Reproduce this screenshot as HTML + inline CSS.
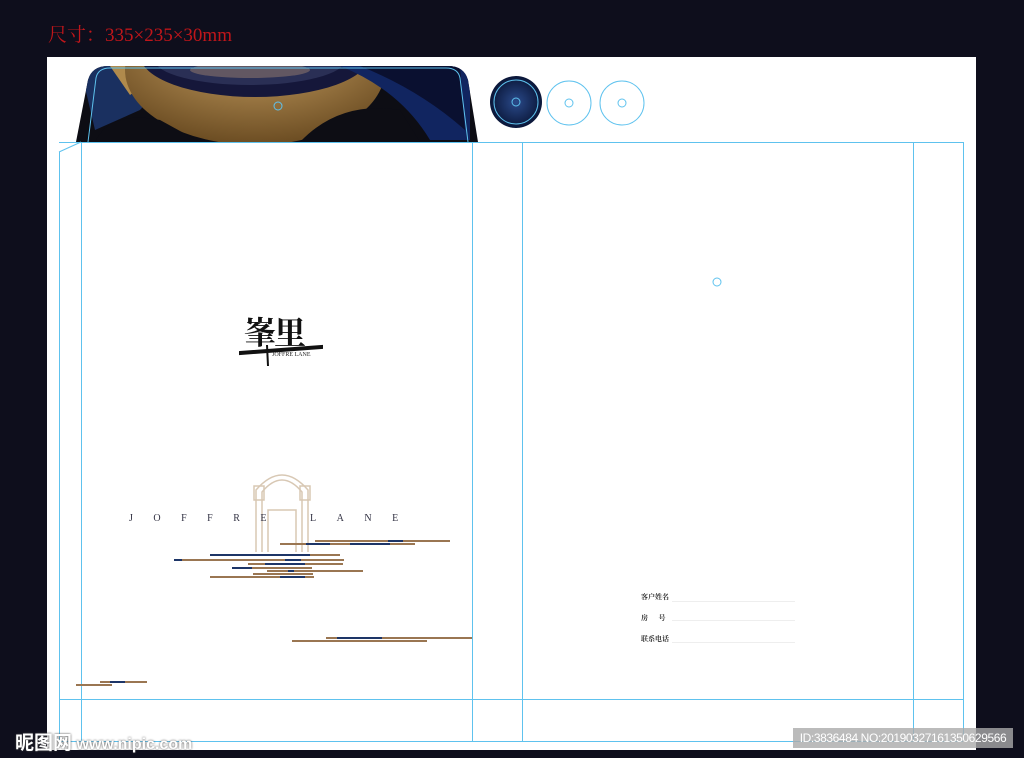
<!DOCTYPE html><html><head><meta charset="utf-8"><style>
body{margin:0;width:1024px;height:758px;background:#0e0e1c;position:relative;overflow:hidden;font-family:"Liberation Sans",sans-serif}
.a{position:absolute}
.h{position:absolute;height:1px;background:#5ec2ee}
.v{position:absolute;width:1px;background:#5ec2ee}
.b{position:absolute;height:2px;background:#9a7652}
.n{position:absolute;height:2px;background:#1d3567}
</style></head><body>
<div class="a" style="left:48px;top:20px;color:#c0161a;font:19px 'Liberation Serif','Noto Serif CJK SC',serif;white-space:nowrap">尺寸：335×235×30mm</div>
<div class="a" style="left:47px;top:57px;width:929px;height:693px;background:#fff"></div>
<svg class="a" style="left:0;top:0" width="1024" height="758">
<defs><radialGradient id="g1" cx="0.5" cy="0.3" r="0.7"><stop offset="0" stop-color="#d0a868"/><stop offset="1" stop-color="#6b4c22"/></radialGradient>
<radialGradient id="g2" cx="0.5" cy="0.5" r="0.5"><stop offset="0" stop-color="#2a4a8a"/><stop offset="1" stop-color="#0a1638"/></radialGradient>
<clipPath id="c"><path d="M76 142 L88 80 Q92 66 108 66 L448 66 Q464 66 468 80 L478 142 Z"/></clipPath></defs>
<path d="M76 142 L88 80 Q92 66 108 66 L448 66 Q464 66 468 80 L478 142 Z" fill="#0d0d14"/>
<g clip-path="url(#c)">
<path d="M80 66 L180 66 L140 110 L95 130 Z" fill="#1a3060"/>
<path d="M110 66 L170 66 L130 95 Z" fill="#b08a4c"/>
<ellipse cx="255" cy="70" rx="130" ry="75" fill="url(#g1)"/>
<ellipse cx="255" cy="55" rx="115" ry="42" fill="#15173a"/>
<ellipse cx="250" cy="60" rx="95" ry="25" fill="#2a2f55"/>
<ellipse cx="250" cy="70" rx="60" ry="8" fill="#9a8070" opacity=".5"/>
<path d="M340 66 L470 66 L470 140 L430 140 Q400 90 340 66Z" fill="#112560"/>
<path d="M360 66 L460 66 L465 130 Q420 90 360 66Z" fill="#0a1030"/>
<path d="M300 142 Q340 100 400 110 L420 142Z" fill="#0d0d14"/>
<path d="M95 142 Q110 110 160 120 L200 142Z" fill="#0d0d14"/>
</g>
<path d="M88 142 L96 78 Q98 68 110 68 L446 68 Q458 68 460 78 L468 142" fill="none" stroke="#5ec2ee" stroke-width="1"/>
<circle cx="278" cy="106" r="4" fill="none" stroke="#5ec2ee"/>
<circle cx="516" cy="102" r="26" fill="url(#g2)"/>
<circle cx="516" cy="102" r="22" fill="none" stroke="#5ec2ee"/>
<circle cx="516" cy="102" r="4" fill="none" stroke="#5ec2ee"/>
<circle cx="569" cy="103" r="22" fill="none" stroke="#5ec2ee"/>
<circle cx="569" cy="103" r="4" fill="none" stroke="#5ec2ee"/>
<circle cx="622" cy="103" r="22" fill="none" stroke="#5ec2ee"/>
<circle cx="622" cy="103" r="4" fill="none" stroke="#5ec2ee"/>
<circle cx="717" cy="282" r="4" fill="none" stroke="#5ec2ee"/>
<path d="M59 152 L81 142" stroke="#5ec2ee" fill="none"/>
<path d="M240 352 L322 346 L322 348 L240 354Z M267 345 L268 366" stroke="#111" stroke-width="2" fill="#111"/>
<g fill="none" stroke="#d8c8b4" stroke-width="1.5">
<path d="M256 552 L256 490 Q282 460 308 490 L308 552"/><path d="M262 552 L262 492 Q282 468 302 492 L302 552"/>
<path d="M268 552 L268 510 L296 510 L296 552"/><path d="M254 486 L264 486 L264 500 L254 500Z M300 486 L310 486 L310 500 L300 500Z"/>
</g>
</svg>
<div class="h" style="left:59px;top:142px;width:904px"></div>
<div class="h" style="left:59px;top:699px;width:904px"></div>
<div class="h" style="left:59px;top:741px;width:904px"></div>
<div class="v" style="left:59px;top:152px;height:589px"></div>
<div class="v" style="left:81px;top:142px;height:599px"></div>
<div class="v" style="left:472px;top:142px;height:599px"></div>
<div class="v" style="left:522px;top:142px;height:599px"></div>
<div class="v" style="left:913px;top:142px;height:599px"></div>
<div class="v" style="left:963px;top:142px;height:599px"></div>
<div class="a" style="left:244px;top:308px;font:bold 32px 'Noto Serif CJK SC',serif;color:#111;letter-spacing:-2px;white-space:nowrap">峯里</div>
<div class="a" style="left:272px;top:352px;font:6px 'Liberation Serif',serif;color:#222;white-space:nowrap">JOFFRE LANE</div>
<div class="a" style="left:129px;top:513px;font:10px 'Liberation Serif',serif;color:#334;letter-spacing:20.5px;white-space:nowrap">JOFFRE LANE</div>
<div class="b" style="left:315px;top:540px;width:135px"></div><div class="n" style="left:388px;top:540px;width:15px"></div>
<div class="b" style="left:280px;top:543px;width:135px"></div><div class="n" style="left:306px;top:543px;width:24px"></div><div class="n" style="left:350px;top:543px;width:40px"></div>
<div class="b" style="left:210px;top:554px;width:130px"></div><div class="n" style="left:210px;top:554px;width:100px"></div>
<div class="b" style="left:174px;top:559px;width:170px"></div><div class="n" style="left:174px;top:559px;width:8px"></div><div class="n" style="left:285px;top:559px;width:16px"></div>
<div class="b" style="left:248px;top:563px;width:95px"></div><div class="n" style="left:265px;top:563px;width:40px"></div>
<div class="b" style="left:232px;top:567px;width:80px"></div><div class="n" style="left:232px;top:567px;width:20px"></div>
<div class="b" style="left:267px;top:570px;width:96px"></div><div class="n" style="left:288px;top:570px;width:6px"></div>
<div class="b" style="left:253px;top:573px;width:60px"></div>
<div class="b" style="left:210px;top:576px;width:104px"></div><div class="n" style="left:280px;top:576px;width:25px"></div>
<div class="b" style="left:326px;top:637px;width:146px"></div><div class="n" style="left:337px;top:637px;width:45px"></div>
<div class="b" style="left:292px;top:640px;width:135px"></div>
<div class="b" style="left:100px;top:681px;width:47px"></div><div class="n" style="left:110px;top:681px;width:15px"></div>
<div class="b" style="left:76px;top:684px;width:36px"></div>
<div class="a" style="left:641px;top:592px;font:bold 7px 'Noto Serif CJK SC',serif;color:#333;white-space:nowrap">客户姓名</div>
<div class="a" style="left:641px;top:613px;font:bold 7px 'Noto Serif CJK SC',serif;color:#333;white-space:nowrap">房&nbsp;&nbsp;&nbsp;&nbsp;&nbsp;&nbsp;号</div>
<div class="a" style="left:641px;top:634px;font:bold 7px 'Noto Serif CJK SC',serif;color:#333;white-space:nowrap">联系电话</div>
<div class="h" style="left:672px;top:601px;width:123px;background:#eee"></div>
<div class="h" style="left:672px;top:620px;width:123px;background:#eee"></div>
<div class="h" style="left:672px;top:642px;width:123px;background:#eee"></div>
<div class="a" style="left:15px;top:728px;white-space:nowrap;color:#fff;text-shadow:0 0 2px #444"><span style="font:bold 19px 'Noto Sans CJK SC',sans-serif">昵图网</span><span style="font:bold 16px 'Liberation Sans',sans-serif"> www.nipic.com</span></div>
<div class="a" style="left:793px;top:728px;width:220px;height:20px;background:rgba(170,170,170,.8);color:#fff;font:12px/20px 'Liberation Sans',sans-serif;text-align:center;white-space:nowrap;letter-spacing:-0.4px">ID:3836484 NO:20190327161350629566</div>
</body></html>
